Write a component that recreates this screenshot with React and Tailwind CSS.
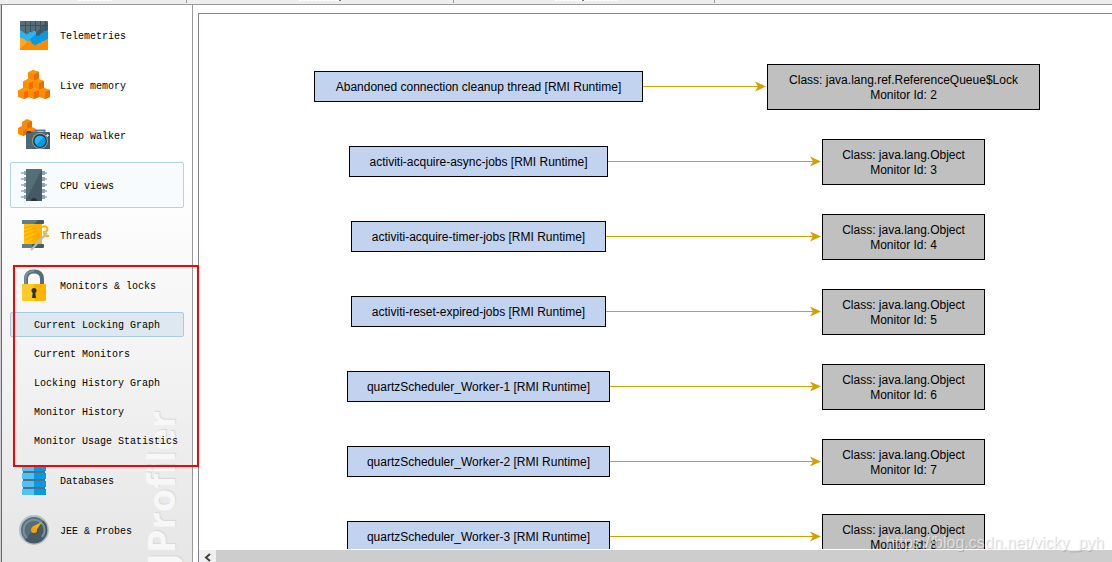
import React from "react";

const TelemetriesIcon = () => (
  <svg width="32" height="32" viewBox="0 0 32 32">
    <rect x="2" y="2" width="28" height="29" rx="1" fill="#455a64" />
    <path d="M2 3Q2 2 3 2H29L14 18H2Z" fill="#546e7a" />
    <path d="M2 6.500H30M7.500 2V14M12.500 2V14M17.500 2V16M22.500 2V14M27.500 2V12" stroke="#3d505a" fill="none" />
    <path d="M2 10L3 12H4L5 13L6 14H7L8 16L9 15H10L11 14L12 13H13L14 14L15 12H17L18 13V16L20 17L22 16L23 14H25L26 12H28L29 11H30V27H2Z" fill="#039be5" />
    <path d="M2 10L3 12H4L5 13L6 14H7L8 16L9 15H10L11 14L12 13H13L14 14L15 12H17L18 13V15L8 24H2Z" fill="#29b6f6" />
    <path d="M2 19H4L5 20H6L8 22H10L11 21L13 22L14 25H16L17 27L19 25H20L21 24H23L24 22H26L27 21H28L29 20H30V30Q30 31 29 31H3Q2 31 2 30Z" fill="#fb8c00" />
    <path d="M2 19H4L5 20H6L8 22H10L11 21L2 30Z" fill="#ffa726" />
  </svg>
);

const Cube = ({ x, y }) => (
  <g transform={`translate(${x} ${y})`}>
    <path d="M0 2.500L5 0L11 2V9L6 11L0 9Z" fill="#fb8c00" />
    <path d="M0 2.500L5 0L11 2L6 4Z" fill="#ff9800" />
    <path d="M6 4L11 2V9L6 11Z" fill="#ef6c00" />
  </g>
);

const MemoryIcon = () => (
  <svg width="32" height="32" viewBox="0 0 32 32">
    <Cube x={10} y={1} />
    <Cube x={5} y={10} />
    <Cube x={15} y={10} />
    <Cube x={0} y={19} />
    <Cube x={10} y={19} />
    <Cube x={21} y={19} />
  </svg>
);

const HeapIcon = () => (
  <svg width="32" height="32" viewBox="0 0 32 32">
    <path d="M4 3L9 0L14 2V8L18 10V15L13 17L9 15L5 17L0 15V9L4 7Z" fill="#fb8c00" />
    <path d="M9 4L14 2V8L9 10ZM5 12L9 10V15L5 17ZM13 12L18 10V15L13 17Z" fill="#ef6c00" />
    <path d="M18.500 14V11.500H26.500V14" stroke="#607d8b" strokeWidth="2" fill="none" />
    <path d="M8 13H31Q32 13 32 14V30H8Z" fill="#455a64" />
    <path d="M8 13H31L14 30H8Z" fill="#4f6773" />
    <path d="M9 12H13V14H9Z" fill="#37474f" />
    <circle cx="22" cy="22" r="8" fill="#90a4ae" />
    <circle cx="22" cy="22" r="7" fill="#263238" />
    <circle cx="22" cy="22" r="5.500" fill="#29b6f6" />
    <path d="M26 18A5.500 5.500 0 0 1 18 26Z" fill="#039be5" />
    <path d="M29.500 15V18M28 16.500H31" stroke="#cfd8dc" />
  </svg>
);

const CpuIcon = () => (
  <svg width="32" height="32" viewBox="0 0 32 32">
    <path d="M3 4H29M3 10H29M3 16H29M3 22H29M3 28H29" stroke="#b0bec5" strokeWidth="2" />
    <path d="M6 4H27M6 10H27M6 16H27M6 22H27M6 28H27" stroke="#90a4ae" strokeWidth="4" />
    <rect x="8" y="0" width="16" height="32" fill="#455a64" />
    <path d="M8 0H24L8 31Z" fill="#546e7a" />
    <path d="M13 32A3 3 0 0 1 19 32Z" fill="#263238" />
  </svg>
);

const ThreadsIcon = () => (
  <svg width="32" height="32" viewBox="0 0 32 32">
    <rect x="6" y="4" width="18" height="22" fill="#ffb300" />
    <path d="M6 4H16L14 26H6Z" fill="#ffc107" />
    <path d="M6 9L15 7M6 13L17 9M6 17L19 12M7 21L21 15M11 23L22 18" stroke="#ffa000" />
    <path d="M24 8Q29 6 29.500 10Q29 13 26 13L27 17L31 17" stroke="#ffb300" strokeWidth="2" fill="none" />
    <rect x="4" y="1" width="22" height="4" rx="1" fill="#455a64" />
    <rect x="4" y="25" width="22" height="4" rx="1" fill="#455a64" />
    <path d="M4 1H20L16 5H4ZM4 25H14V29H4Z" fill="#607d8b" />
    <path d="M13 31L29 14" stroke="#b0bec5" strokeWidth="2" />
  </svg>
);

const LockIcon = () => (
  <svg width="32" height="32" viewBox="0 0 32 32">
    <path d="M8 16V10Q8 2.500 16 2.500Q24 2.500 24 10V16" stroke="#546e7a" strokeWidth="4" fill="none" />
    <path d="M7.500 15V10Q7.500 2 16 2" stroke="#78909c" strokeWidth="2" fill="none" />
    <rect x="4" y="15" width="24" height="17" rx="1" fill="#ffb300" />
    <path d="M5 15H16V32H5Q4 32 4 31V16Z" fill="#ffca28" />
    <circle cx="16" cy="21.500" r="2.500" fill="#263238" />
    <path d="M15 22H17L18 29H14Z" fill="#263238" />
  </svg>
);

const DatabaseIcon = () => (
  <svg width="32" height="32" viewBox="0 0 32 32">
    <path d="M4 1H28V7H4ZM4 9H28V15H4ZM4 17H28V23H4ZM4 25H28V31H4Z" fill="#039be5" />
    <path d="M4 1H16V7H4ZM4 9H16V15H4ZM4 17H16V23H4ZM4 25H16V31H4Z" fill="#4fc3f7" />
    <path d="M5 8H27M5 16H27M5 24H27" stroke="#546e7a" strokeWidth="2" />
  </svg>
);

const GaugeIcon = () => (
  <svg width="32" height="32" viewBox="0 0 32 32">
    <circle cx="16" cy="16" r="14" fill="#546e7a" stroke="#b0bec5" strokeWidth="2" />
    <path d="M25.500 6.500A13 13 0 0 1 6.500 25.500Z" fill="#455a64" />
    <path d="M9 24A10.500 10.500 0 1 1 24 23" stroke="#78909c" strokeWidth="2" fill="none" />
    <path d="M24 8L14 13L17 18Z" fill="#ffb300" />
    <circle cx="16" cy="16" r="3" fill="#ffa000" />
  </svg>
);

const views = [
  { label: "Telemetries", Icon: TelemetriesIcon },
  { label: "Live memory", Icon: MemoryIcon },
  { label: "Heap walker", Icon: HeapIcon },
  { label: "CPU views", Icon: CpuIcon, hovered: true },
  { label: "Threads", Icon: ThreadsIcon },
  {
    label: "Monitors & locks",
    Icon: LockIcon,
    children: [
      "Current Locking Graph",
      "Current Monitors",
      "Locking History Graph",
      "Monitor History",
      "Monitor Usage Statistics",
    ],
  },
  { label: "Databases", Icon: DatabaseIcon },
  { label: "JEE & Probes", Icon: GaugeIcon },
];

const RMI = " [RMI Runtime]";
const rows = [
  { thread: "Abandoned connection cleanup thread" + RMI, x: 115, w: 329, cls: "java.lang.ref.ReferenceQueue$Lock", mx: 568, mw: 273, id: 2 },
  { thread: "activiti-acquire-async-jobs" + RMI, x: 150, w: 259, cls: "java.lang.Object", mx: 623, mw: 163, id: 3 },
  { thread: "activiti-acquire-timer-jobs" + RMI, x: 152, w: 255, cls: "java.lang.Object", mx: 623, mw: 163, id: 4 },
  { thread: "activiti-reset-expired-jobs" + RMI, x: 152, w: 255, cls: "java.lang.Object", mx: 623, mw: 163, id: 5 },
  { thread: "quartzScheduler_Worker-1" + RMI, x: 148, w: 263, cls: "java.lang.Object", mx: 623, mw: 163, id: 6 },
  { thread: "quartzScheduler_Worker-2" + RMI, x: 148, w: 263, cls: "java.lang.Object", mx: 623, mw: 163, id: 7 },
  { thread: "quartzScheduler_Worker-3" + RMI, x: 148, w: 263, cls: "java.lang.Object", mx: 623, mw: 163, id: 8 },
];

function Sidebar() {
  return (
    <nav className="relative w-[191px] shrink-0 overflow-hidden border-r border-[#999] bg-linear-to-b from-white from-30% to-[#e6e6e6] px-2 pt-[7px] font-['Liberation_Mono',monospace] text-[10px] leading-4 text-black">
      <div
        aria-hidden="true"
        className="absolute top-[406px] left-[132px] rotate-180 [writing-mode:vertical-rl] font-['Open_Sans',sans-serif] text-[38px] leading-[52px] font-bold whitespace-nowrap text-[#f7f7f7] [text-shadow:1px_1px_1px_#d8d8d8]"
      >
        JProfiler
      </div>
      <ul className="relative flex flex-col gap-1">
        {views.map(({ label, Icon, hovered, children }) => (
          <li key={label} className="flex flex-col gap-1">
            <button
              type="button"
              className={
                "flex h-[46px] w-full items-center gap-[10px] rounded-xs border pl-[7px] text-left " +
                (hovered ? "border-[#b5d3e7] bg-[#f7fbfe]" : "border-transparent")
              }
            >
              <Icon />
              <span className="pt-1">{label}</span>
            </button>
            {children && (
              <ul className="flex flex-col gap-1">
                {children.map((c, i) => (
                  <li key={c}>
                    <button
                      type="button"
                      className={
                        "flex h-[25px] w-full items-center rounded-xs border pt-0.5 pl-[23px] text-left whitespace-nowrap " +
                        (i === 0 ? "border-[#a9cbe2] bg-[#dde8f0]" : "border-transparent")
                      }
                    >
                      {c}
                    </button>
                  </li>
                ))}
              </ul>
            )}
          </li>
        ))}
      </ul>
    </nav>
  );
}

function Graph() {
  return (
    <div className="relative flex-1 overflow-hidden border-b border-white bg-white font-['Liberation_Sans',sans-serif] text-[12px] leading-[15px] text-black">
      <svg className="absolute top-0 left-0" width="912" height="600">
        {rows.map((r, i) => {
          const y = 72.5 + i * 75;
          return (
            <g key={r.id}>
              <path d={`M${r.x + r.w} ${y}H${r.mx - 6}`} stroke="#d4a000" />
              <path d={`M${r.mx - 1} ${y}l-11 -5l3 5l-3 5Z`} fill="#d4a000" />
            </g>
          );
        })}
      </svg>
      {rows.map((r, i) => (
        <React.Fragment key={r.id}>
          <div
            className="absolute flex h-[31px] items-center justify-center border border-black bg-[#c2d3f0] pt-0.5 whitespace-nowrap"
            style={{ left: r.x, top: 57 + i * 75, width: r.w }}
          >
            {r.thread}
          </div>
          <div
            className="absolute flex h-[46px] flex-col items-center justify-center border border-black bg-[#c0c0c0] pt-0.5 whitespace-nowrap"
            style={{ left: r.mx, top: 50 + i * 75, width: r.mw }}
          >
            <span>Class: {r.cls}</span>
            <span>Monitor Id: {r.id}</span>
          </div>
        </React.Fragment>
      ))}
    </div>
  );
}

export default function App() {
  return (
    <div className="relative flex h-screen flex-col overflow-hidden bg-white">
      <header className="h-[5px] shrink-0 border-b border-[#999] bg-[#eee] pl-[2px]">
        <svg className="block" width="1110" height="4">
          <path d="M76 .5H110M297 .5H336M553 .5H615" stroke="#fff" strokeDasharray="3 1" />
          <path d="M337 .5H339M580 .5H582" stroke="#8d6e63" />
          <path d="M184.500 0V3M451.500 0V3M712.500 0V3" stroke="#999" />
        </svg>
      </header>
      <div className="flex min-h-0 flex-1">
        <div className="w-[2px] shrink-0 border-r border-[#1f7bc8] bg-[#d0d0d0]" />
        <Sidebar />
        <main className="flex min-w-0 flex-1 flex-col pt-2 pl-[5px]">
          <div className="flex min-h-0 flex-1 flex-col border-t border-l border-[#84848c]">
            <Graph />
            <div className="flex h-3 shrink-0 overflow-hidden bg-[#cdcdcd]">
              <button type="button" aria-label="Scroll left" className="w-[17px] shrink-0 bg-[#f0f0f0]">
                <svg width="17" height="12" viewBox="0 0 17 12">
                  <path d="M11 4L7 7.500L11 11" stroke="#404040" strokeWidth="2" fill="none" />
                </svg>
              </button>
            </div>
          </div>
        </main>
      </div>
      <div className="pointer-events-none absolute top-[265px] left-[13px] h-[202px] w-[186px] border-2 border-[#f00]" />
      <div className="pointer-events-none absolute right-2 bottom-[9px] font-['Liberation_Sans',sans-serif] text-[16px] leading-5 text-white/60 [text-shadow:1px_1px_1px_#00000030]">
        https://blog.csdn.net/vicky_pyh
      </div>
    </div>
  );
}
